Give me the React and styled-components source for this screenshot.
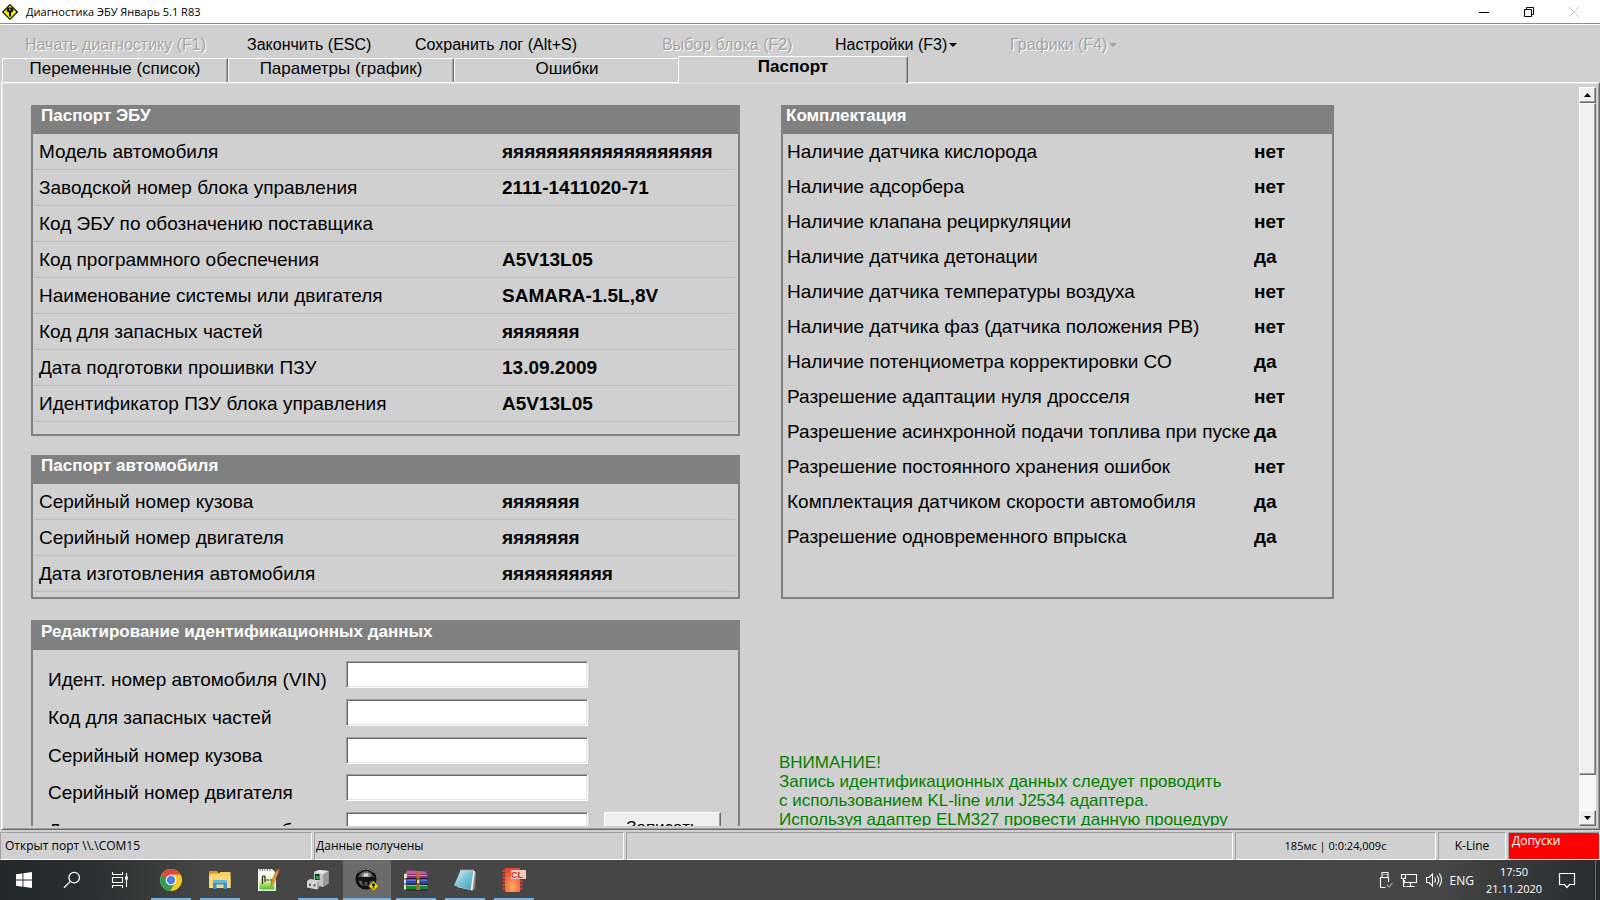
import React from 'react'
import styled, { createGlobalStyle, css } from 'styled-components'

const MENU = [
  { text: 'Начать диагностику (F1)', width: 222, disabled: true },
  { text: 'Закончить (ESC)', width: 168 },
  { text: 'Сохранить лог (Alt+S)', width: 247 },
  { text: 'Выбор блока (F2)', width: 173, disabled: true },
  { text: 'Настройки (F3)', width: 175, arrow: true },
  { text: 'Графики (F4)', width: 140, arrow: true, disabled: true },
]

const TABS = ['Переменные (список)', 'Параметры (график)', 'Ошибки', 'Паспорт']

const ECU = [
  ['Модель автомобиля', 'яяяяяяяяяяяяяяяяяяя'],
  ['Заводской номер блока управления', '2111-1411020-71'],
  ['Код ЭБУ по обозначению поставщика', ''],
  ['Код программного обеспечения', 'A5V13L05'],
  ['Наименование системы или двигателя', 'SAMARA-1.5L,8V'],
  ['Код для запасных частей', 'яяяяяяя'],
  ['Дата подготовки прошивки ПЗУ', '13.09.2009'],
  ['Идентификатор ПЗУ блока управления', 'A5V13L05'],
]

const CAR = [
  ['Серийный номер кузова', 'яяяяяяя'],
  ['Серийный номер двигателя', 'яяяяяяя'],
  ['Дата изготовления автомобиля', 'яяяяяяяяяя'],
]

const EQUIPMENT = [
  ['Наличие датчика кислорода', 'нет'],
  ['Наличие адсорбера', 'нет'],
  ['Наличие клапана рециркуляции', 'нет'],
  ['Наличие датчика детонации', 'да'],
  ['Наличие датчика температуры воздуха', 'нет'],
  ['Наличие датчика фаз (датчика положения РВ)', 'нет'],
  ['Наличие потенциометра корректировки СО', 'да'],
  ['Разрешение адаптации нуля дросселя', 'нет'],
  ['Разрешение асинхронной подачи топлива при пуске', 'да'],
  ['Разрешение постоянного хранения ошибок', 'нет'],
  ['Комплектация датчиком скорости автомобиля', 'да'],
  ['Разрешение одновременного впрыска', 'да'],
]

const FIELDS = [
  ['vin', 'Идент. номер автомобиля (VIN)'],
  ['parts', 'Код для запасных частей'],
  ['body', 'Серийный номер кузова'],
  ['engine', 'Серийный номер двигателя'],
  ['date', 'Дата изготовления автомобиля'],
]

const AppIcon = () => (
  <svg width="16" height="16" viewBox="0 0 16 16">
    <path d="M8 .7 15.3 8 8 15.3 .7 8z" fill="#f6ee00" stroke="#111" strokeWidth="1.2" />
    <path d="M6 3.500h4l1.300 1.500v1.800L10 8.300H9v4.200H7V8.300H6L4.700 6.800V5z" fill="#111" />
    <path d="M7.300 4.800h1.300v1.400H7.300z" fill="#f6ee00" />
  </svg>
)

const StartIcon = () => (
  <svg width="16" height="16" viewBox="0 0 16 16" fill="#fff">
    <path d="M0 2.3 6.5 1.4v6.2H0zM7.4 1.2 16 0v7.6H7.4zM0 8.5h6.5v6.2L0 13.8zM7.4 8.5H16V16l-8.6-1.2z" />
  </svg>
)

const SearchIcon = () => (
  <svg width="18" height="18" viewBox="0 0 18 18" fill="none" stroke="#fff" strokeWidth="1.3">
    <circle cx="11.2" cy="6.6" r="5.3" />
    <path d="M7.4 10.4 1 16.8" />
  </svg>
)

const TaskViewIcon = () => (
  <svg width="18" height="16" viewBox="0 0 18 16" fill="none" stroke="#fff" strokeWidth="1.1">
    <path d="M1.5 0v2.5h10V0M1.5 16v-2.5h10V16M1.5 5.5h10v5h-10zM15.5 1v14" />
    <path d="M14 4.5h3v3h-3z" fill="#fff" stroke="none" />
  </svg>
)

const ChromeIcon = () => (
  <svg width="24" height="24" viewBox="0 0 24 24">
    <circle cx="12" cy="12" r="11" fill="#fbc926" />
    <path d="M2.47 6.5A11 11 0 0 0 11.2 23l5.1-8.5L12 12z" fill="#2fa155" />
    <path d="M2.47 6.5A11 11 0 0 1 21.53 6.5H12L7.5 14z" fill="#de4a3c" />
    <path d="M2.47 6.5 7.7 15.500 9 12z" fill="#2fa155" />
    <circle cx="12" cy="12" r="5.3" fill="#fff" />
    <circle cx="12" cy="12" r="4.2" fill="#4a80ea" />
  </svg>
)

const FolderIcon = () => (
  <svg width="24" height="22" viewBox="0 0 24 22">
    <path d="M1 2h8l1.5 2H22v6H1z" fill="#d99a1e" />
    <path d="M3 4.5h9V3h10.5v16H1V6z" fill="#fad05c" />
    <path d="M1 7h21.5v12H1z" fill="#fbd874" />
    <path d="M5 20v-7.5Q5 11 6.5 11h11q1.5 0 1.5 1.500V20h-3.500v-4.500h-7V20z" fill="#3a96cf" />
    <path d="M5 14h14v-2q0-1-1.500-1h-11Q5 11 5 12z" fill="#65b5e2" />
  </svg>
)

const NotepadPlusIcon = () => (
  <svg width="24" height="24" viewBox="0 0 24 24">
    <defs>
      <linearGradient id="npp" x1="0" y1="0" x2="0" y2="1">
        <stop offset="0.2" stopColor="#fdfdfa" />
        <stop offset="0.6" stopColor="#cfe98a" />
        <stop offset="1" stopColor="#4fbf1c" />
      </linearGradient>
    </defs>
    <path d="M1 1h14l4 4v18H1z" fill="#f4f6ee" />
    <path d="M2.5 3.500h15v18h-15z" fill="url(#npp)" />
    <path d="M3 1v2M5.5 1v2M8 1v2M10.500 1v2M13 1v2" stroke="#777" />
    <path d="M5.500 8v8M8 8v6M5.500 8H8M9.500 12H12M13 12h2.500" stroke="#222" strokeWidth="1.2" fill="none" />
    <path d="m19.5 2.500 2.500 1-5.500 12-2.500 2 .3-3.500z" fill="#e8a22c" stroke="#8b5a18" strokeWidth="0.6" />
    <path d="m19.500 2.500 2.500 1 .6-1.800-2.200-.9z" fill="#c9544a" />
  </svg>
)

const AdapterIcon = () => (
  <svg width="24" height="22" viewBox="0 0 24 22">
    <path d="m8 3 5-2 9.5 1v12.5L17 18l-9-2z" fill="#c4c4c4" />
    <path d="m17 5 5.5-3v12.5L17 18z" fill="#9a9a9a" />
    <path d="m8 3 5-2 9.5 1L17 5z" fill="#e6e6e6" />
    <path d="M9 5h4.500v6H9z" fill="#20352a" />
    <path d="M10 7h2.500v3H10z" fill="#22b04a" />
    <path d="m1 12 3-2 9 1.500v7l-2 2L1 18.500z" fill="#d4d4d4" />
    <path d="m11 14 2-2.500v7l-2 2z" fill="#a5a5a5" />
    <path d="M3 14.500h2v2.500H3zM7.500 15h2v2.500h-2z" fill="#6a6a6a" />
  </svg>
)

const WheelIcon = () => (
  <svg width="26" height="26" viewBox="0 0 26 26">
    <circle cx="12" cy="12" r="9.200" fill="#5c5c5c" stroke="#0e0e0e" strokeWidth="2.600" />
    <path d="M4.500 5.500q7.500-7 15 0" stroke="#8d8d8d" fill="none" />
    <path d="M3 10.500q9-3 18 0v3l-5 .5-1 4.500-1.500 2.500h-3L9 18.500 8 14l-5-.5z" fill="#141414" />
    <path d="M8 6.500q4-2 8 0l.5 3.500h-9z" fill="#8f8f8f" />
    <path d="M10 6.500h4v3h-4z" fill="#d8d8d8" />
    <path d="M10.500 15h3v4h-3z" fill="#4a4a4a" />
    <path d="m19.500 14 5 5-5 5-5-5z" fill="#f5d713" stroke="#604f00" strokeWidth="0.6" />
    <path d="M18 16.500h3v2.500h-.9v2.800h-1.300V19H18z" fill="#222" />
  </svg>
)

const ArchiveIcon = () => (
  <svg width="26" height="24" viewBox="0 0 26 24">
    <path d="m1 6 4-3.5 17 1L25 7v3H3z" fill="#c75c9f" />
    <path d="M3 6h22v4.5H3z" fill="#8d2d73" />
    <path d="M1 6h3v4.5H1zM1 11.5h3v4H1zM1 16.5h3v5H1z" fill="#ece3c9" />
    <path d="M3 11h22v4.8H3z" fill="#2848c4" />
    <path d="M3 16.5h22v5.2H3z" fill="#17883a" />
    <path d="M4 12h20M4 17.5h20M4 7.5h20" stroke="#fff" strokeOpacity="0.5" />
    <path d="M3 10.7h22M3 16.2h22M3 22h22" stroke="#1b1425" />
    <path d="m12 2.500 3 .5 2 4v15h-3.500V7z" fill="#b8702c" />
    <path d="M13.500 11h3.500v5h-3.500z" fill="#ddd29b" stroke="#40300f" />
  </svg>
)

const NotebookIcon = () => (
  <svg width="24" height="24" viewBox="0 0 24 24">
    <defs>
      <linearGradient id="book" x1="0" y1="0" x2="1" y2="1">
        <stop offset="0" stopColor="#d8f2f6" />
        <stop offset="0.5" stopColor="#79c3d4" />
        <stop offset="1" stopColor="#3c9fb7" />
      </linearGradient>
    </defs>
    <path d="m20 3 3 1-1 17-4 2z" fill="#8f8469" />
    <path d="M8 3h14l-2.5 19.5L4 19z" fill="#eee" />
    <path d="M7.5 2.5h13L17.5 22 1 17.5z" fill="url(#book)" />
    <path d="M7.5 2.5h13" stroke="#e4e4e4" strokeWidth="2" strokeDasharray="1 1" />
  </svg>
)

const CombiIcon = () => (
  <svg width="26" height="26" viewBox="0 0 26 26">
    <defs>
      <radialGradient id="combi" cx="0.5" cy="0.8" r="0.8">
        <stop offset="0" stopColor="#ffad62" />
        <stop offset="1" stopColor="#e8432f" />
      </radialGradient>
    </defs>
    <path d="M1.5 4h20M1.5 7.5h20M1.5 11h20M1.5 14.5h20M1.5 18h20M1.5 21.5h20" stroke="#e23b2b" strokeWidth="2" />
    <path d="M4 1h15v24H4z" fill="url(#combi)" />
    <rect x="10" y="3" width="15" height="9" fill="#f5c9c4" />
    <text x="10" y="11" fontFamily="Liberation Sans, sans-serif" fontSize="9" fontWeight="700" fill="#b3352c">CL</text>
  </svg>
)

const UsbIcon = () => (
  <svg width="14" height="18" viewBox="0 0 14 18" fill="none" stroke="#fff" strokeWidth="1.1">
    <path d="M3 6.5V1.5h6v5M9.5 11V6.5h-8v10h5M4.5 3.5h1M6.8 3.5h1" />
    <path d="m8 14 2 2 3.5-4" stroke="#aaa" />
  </svg>
)

const NetworkIcon = () => (
  <svg width="18" height="16" viewBox="0 0 18 16" fill="none" stroke="#fff" strokeWidth="1.1">
    <path d="M6.5 2.5h10v8h-12V8M10.5 10.500v3.500M6.500 14.500h8M1.500 2.500h4v4h-4zM3.500 6.500v8h2" />
  </svg>
)

const SoundIcon = () => (
  <svg width="18" height="16" viewBox="0 0 18 16" fill="none" stroke="#fff" strokeWidth="1.1">
    <path d="M1.5 5.5H4L7.5 2v12L4 10.5H1.500zM9.500 5.500q2 2.500 0 5M12 3.500q3.500 4.500 0 9M14.300 1.500q4.500 6.500 0 13" />
  </svg>
)

const NoticeIcon = () => (
  <svg width="18" height="18" viewBox="0 0 18 18" fill="none" stroke="#fff" strokeWidth="1.2">
    <path d="M1.5 2.5h15v11h-5l-2.500 3-2.500-3h-5z" />
  </svg>
)

const APPS = [
  { name: 'Chrome', Icon: ChromeIcon, running: true },
  { name: 'Проводник', Icon: FolderIcon, running: true },
  { name: 'Notepad++', Icon: NotepadPlusIcon },
  { name: 'Адаптер', Icon: AdapterIcon, running: true },
  { name: 'Диагностика', Icon: WheelIcon, running: true, active: true },
  { name: 'WinRAR', Icon: ArchiveIcon, running: true },
  { name: 'Блокнот', Icon: NotebookIcon, running: true },
  { name: 'CombiLoader', Icon: CombiIcon, running: true },
]

const DataPanel = ({ title, rows, lined }) => (
  <Panel $foot={lined}>
    <PanelTitle $indent={lined ? 8 : 3}>{title}</PanelTitle>
    <Table $lined={lined}>
      <tbody>
        {rows.map(([name, value]) => (
          <tr key={name}>
            <Name scope="row" $lined={lined}>{name}</Name>
            <Value $lined={lined}>{value}</Value>
          </tr>
        ))}
      </tbody>
    </Table>
  </Panel>
)

const EditPanel = () => (
  <Panel>
    <PanelTitle $indent={8} $tall>Редактирование идентификационных данных</PanelTitle>
    <Form onSubmit={e => e.preventDefault()}>
      {FIELDS.map(([id, label]) => (
        <React.Fragment key={id}>
          <Label htmlFor={id}>{label}</Label>
          <Input id={id} type="text" />
        </React.Fragment>
      ))}
      <WriteButton type="submit">Записать</WriteButton>
    </Form>
  </Panel>
)

const App = () => (
  <Screen>
    <GlobalStyle />
    <TitleBar>
      <AppIcon />
      <Title>Диагностика ЭБУ Январь 5.1 R83</Title>
      <WindowButton aria-label="Свернуть">
        <svg width="10" height="10" stroke="#000"><path d="M0 5.5h10" /></svg>
      </WindowButton>
      <WindowButton aria-label="Восстановить">
        <svg width="10" height="10" fill="none" stroke="#000">
          <path d="M.5 2.5h7v7h-7zM2.5 2.5v-2h7v7h-2" />
        </svg>
      </WindowButton>
      <WindowButton aria-label="Закрыть" disabled>
        <svg width="10" height="10" stroke="#c8c8c8"><path d="m0 0 10 10M10 0 0 10" /></svg>
      </WindowButton>
    </TitleBar>

    <Menu>
      {MENU.map(m => (
        <MenuButton key={m.text} $width={m.width} disabled={m.disabled}>
          {m.text}
          {m.arrow && <Arrow />}
        </MenuButton>
      ))}
    </Menu>

    <Tabs role="tablist">
      {TABS.map(t => (
        <Tab key={t} role="tab" aria-selected={t === 'Паспорт'} $active={t === 'Паспорт'}>
          {t}
        </Tab>
      ))}
    </Tabs>

    <TabPage>
      <Content>
        <Stack>
          <DataPanel title="Паспорт ЭБУ" rows={ECU} lined={12} />
          <DataPanel title="Паспорт автомобиля" rows={CAR} lined={5} />
        </Stack>
        <RightCell>
          <DataPanel title="Комплектация" rows={EQUIPMENT} />
        </RightCell>
        <EditPanel />
        <Warning>
          ВНИМАНИЕ!
          <br />
          Запись идентификационных данных следует проводить
          <br />
          с использованием KL-line или J2534 адаптера.
          <br />
          Используя адаптер ELM327 провести данную процедуру
        </Warning>
      </Content>
      <Scrollbar>
        <ScrollButton aria-label="Вверх">
          <svg width="7" height="4"><path d="M0 4 3.5 0 7 4z" /></svg>
        </ScrollButton>
        <Thumb />
        <Track />
        <ScrollButton aria-label="Вниз">
          <svg width="7" height="4"><path d="M0 0h7L3.5 4z" /></svg>
        </ScrollButton>
      </Scrollbar>
    </TabPage>

    <StatusBar>
      <Status $width={312} $indent={4}>Открыт порт \\.\COM15</Status>
      <Status $width={310} $indent={1}>Данные получены</Status>
      <Status />
      <Status $width={201} $center $small>185мс | 0:0:24,009с</Status>
      <Status $width={68} $center>K-Line</Status>
      <Status $width={92} $indent={3} $alarm>Допуски</Status>
    </StatusBar>

    <Taskbar>
      <SystemButtons>
        <TaskButton aria-label="Пуск"><StartIcon /></TaskButton>
        <TaskButton aria-label="Поиск"><SearchIcon /></TaskButton>
        <TaskButton aria-label="Представление задач"><TaskViewIcon /></TaskButton>
      </SystemButtons>
      <Apps>
        {APPS.map(({ name, Icon, running, active }) => (
          <TaskButton key={name} aria-label={name} $running={running} $active={active}>
            <Icon />
          </TaskButton>
        ))}
      </Apps>
      <Tray>
        <UsbIcon />
        <NetworkIcon />
        <SoundIcon />
        <span>ENG</span>
      </Tray>
      <Clock>
        <span>17:50</span>
        <span>21.11.2020</span>
      </Clock>
      <NoticeButton aria-label="Уведомления"><NoticeIcon /></NoticeButton>
    </Taskbar>
  </Screen>
)

export default App

const GlobalStyle = createGlobalStyle`
  * {
    box-sizing: border-box;
  }

  body {
    margin: 0;
    background: #d0d0d0;
    color: #000;
    font-family: 'Liberation Sans', Arial, sans-serif;
  }

  button, input {
    font: inherit;
    color: inherit;
    padding: 0;
    margin: 0;
    border: 0;
    border-radius: 0;
    background: none;
  }

  svg {
    display: block;
    flex: none;
  }
`

const Screen = styled.div`
  height: 100vh;
  display: flex;
  flex-direction: column;
  overflow: hidden;
`

const TitleBar = styled.header`
  flex: none;
  height: 24px;
  display: flex;
  align-items: center;
  padding: 0 4px 0 2px;
  background: #fff;
  border-bottom: 1px solid #8c8c8c;
`

const Title = styled.h1`
  flex: 1;
  margin: 0 0 0 8px;
  font: 400 11px 'Open Sans', sans-serif;
`

const WindowButton = styled.button`
  width: 45px;
  height: 22px;
  display: flex;
  align-items: center;
  justify-content: center;
`

const Menu = styled.nav`
  flex: none;
  height: 32px;
  display: flex;
  align-items: flex-start;
  padding: 11px 0 0 25px;
  border-top: 1px solid #fff;
`

const MenuButton = styled.button`
  width: ${p => p.$width}px;
  display: flex;
  align-items: center;
  font-size: 16px;
  line-height: 18px;
  white-space: nowrap;

  &:disabled {
    color: #a3a3a3;
    text-shadow: 1px 1px #fff;
  }
`

const Arrow = styled.i`
  margin-left: 2px;
  border: 4px solid transparent;
  border-top-color: currentColor;
  border-bottom: 0;
`

const Tabs = styled.div`
  flex: none;
  height: 26px;
  display: flex;
  align-items: flex-end;
  padding-left: 2px;
`

const Tab = styled.button`
  width: 226px;
  height: 24px;
  display: flex;
  justify-content: center;
  font-size: 17px;
  line-height: 19px;
  background: #d0d0d0;
  border: solid;
  border-width: 1px 1px 0;
  border-color: #fff #696969 #fff #fff;
  box-shadow: inset -1px 0 #a0a0a0;
  border-radius: 2px 2px 0 0;

  ${p =>
    p.$active &&
    css`
      position: relative;
      z-index: 1;
      width: 230px;
      height: 27px;
      margin: 0 -2px -1px;
      font-weight: 700;
    `}
`

const TabPage = styled.main`
  flex: 1;
  min-height: 0;
  display: flex;
  margin: 0 0 2px 1px;
  padding: 4px 3px 3px 2px;
  border: 1px solid;
  border-color: #fff #696969 #696969 #fff;
  box-shadow: inset 1px 1px #e3e3e3, inset -1px -1px #a0a0a0;
`

const Content = styled.div`
  flex: 1;
  min-width: 0;
  display: grid;
  grid-template-columns: 709fr 555fr;
  align-content: start;
  gap: 21px 39px;
  padding: 18px 245px 0 27px;
  overflow: hidden;
`

const Stack = styled.div`
  display: flex;
  flex-direction: column;
  gap: 19px;
`

const RightCell = styled.div`
  display: grid;
  padding-left: 2px;
`

const Panel = styled.section`
  border: 2px solid #808080;
  padding-bottom: ${p => p.$foot || 0}px;
`

const PanelTitle = styled.h2`
  height: ${p => (p.$tall ? 28 : 27)}px;
  margin: 0;
  padding-left: ${p => p.$indent}px;
  background: #808080;
  color: #fff;
  font-size: 17px;
  line-height: ${p => (p.$tall ? 19 : 18)}px;
`

const Table = styled.table`
  width: ${p => (p.$lined ? 'calc(100% - 4px)' : '100%')};
  margin-left: ${p => (p.$lined ? 1 : 0)}px;
  border-spacing: 0;
  font-size: 19px;
  line-height: 22px;
`

const Name = styled.th`
  width: ${p => (p.$lined ? 468 : 471)}px;
  height: ${p => (p.$lined ? 36 : 35)}px;
  padding: 0 0 0 ${p => (p.$lined ? 5 : 4)}px;
  border-bottom: ${p => (p.$lined ? '1px solid #bdbdbd' : 0)};
  font-weight: 400;
  text-align: left;
  white-space: nowrap;
`

const Value = styled.td`
  padding: 0;
  border-bottom: ${p => (p.$lined ? '1px solid #bdbdbd' : 0)};
  font-weight: 700;
`

const Form = styled.form`
  display: grid;
  grid-template-columns: 298px 242px 132px;
  grid-template-rows: 38px 38px 37px 38px 40px;
  align-items: start;
  padding: 11px 0 0 15px;
`

const Label = styled.label`
  grid-column: 1;
  padding-top: 8px;
  font-size: 19px;
  line-height: 22px;
  white-space: nowrap;
`

const Input = styled.input`
  grid-column: 2;
  height: 27px;
  padding: 0 4px;
  background: #fff;
  border: 1px solid;
  border-color: #a0a0a0 #fff #fff #a0a0a0;
  box-shadow: inset 1px 1px #696969, inset -1px -1px #e3e3e3;
`

const WriteButton = styled.button`
  grid-area: 5 / 3;
  height: 32px;
  margin-left: 16px;
  width: 117px;
  background: #efefef;
  border: 1px solid;
  border-color: #fff #696969 #696969 #fff;
  box-shadow: inset -1px -1px #a0a0a0;
  font-size: 17px;
`

const Warning = styled.p`
  margin: 0;
  padding-top: 133px;
  color: #008000;
  font-size: 17px;
  line-height: 19px;
  white-space: nowrap;
`

const Scrollbar = styled.div`
  flex: none;
  width: 17px;
  display: flex;
  flex-direction: column;
`

const ScrollButton = styled.button`
  height: 16px;
  display: flex;
  align-items: center;
  justify-content: center;
  background: #f0f0f0;
  border: 1px solid;
  border-color: #fff #696969 #696969 #fff;
  box-shadow: inset -1px -1px #a0a0a0;
`

const Thumb = styled.div`
  flex: 671;
  background: #f0f0f0;
  border: 1px solid;
  border-color: #fff #696969 #696969 #fff;
  box-shadow: inset -1px -1px #a0a0a0;
`

const Track = styled.div`
  flex: 35;
  background: #f8f8f8;
`

const StatusBar = styled.footer`
  flex: none;
  height: 28px;
  display: flex;
  gap: 2px;
  font: 12px/16px 'Open Sans', sans-serif;
`

const Status = styled.div`
  flex: ${p => (p.$width ? `0 0 ${p.$width}px` : '1')};
  display: flex;
  align-items: center;
  justify-content: ${p => (p.$center ? 'center' : 'flex-start')};
  padding-left: ${p => p.$indent || 0}px;
  border: 1px solid;
  border-color: #a0a0a0 #fff #fff #a0a0a0;
  font-size: ${p => (p.$small ? 11 : 12)}px;
  white-space: nowrap;

  ${p =>
    p.$alarm &&
    css`
      align-items: flex-start;
      background: #f00;
      color: #fff;
    `}
`

const Taskbar = styled.div`
  flex: none;
  height: 40px;
  display: flex;
  background: linear-gradient(90deg, #22282a, #292d2e 80px, #464646 210px, #464646 calc(100% - 160px), #272c2e);
  color: #fff;
  font: 12px 'Open Sans', sans-serif;
`

const SystemButtons = styled.div`
  display: flex;
  margin-right: 3px;
`

const Apps = styled.div`
  flex: 1;
  display: flex;
  gap: 1px;
`

const TaskButton = styled.button`
  position: relative;
  width: 48px;
  display: flex;
  align-items: center;
  justify-content: center;
  background: ${p => (p.$active ? '#6b6b6b' : 'none')};

  &:after {
    content: '';
    display: ${p => (p.$running ? 'block' : 'none')};
    position: absolute;
    bottom: 0;
    left: ${p => (p.$active ? 0 : 4)}px;
    right: ${p => (p.$active ? 0 : 4)}px;
    height: 2px;
    background: #76b4e6;
  }
`

const Tray = styled.div`
  display: flex;
  align-items: center;
  gap: 7px;
`

const Clock = styled.time`
  width: 80px;
  display: flex;
  flex-direction: column;
  align-items: center;
  justify-content: center;
  font-size: 11px;
  line-height: 17px;
`

const NoticeButton = styled.button`
  width: 42px;
  display: flex;
  align-items: center;
  padding-left: 4px;
  margin-right: 4px;
  border-right: 1px solid #6a6d6e;
`
